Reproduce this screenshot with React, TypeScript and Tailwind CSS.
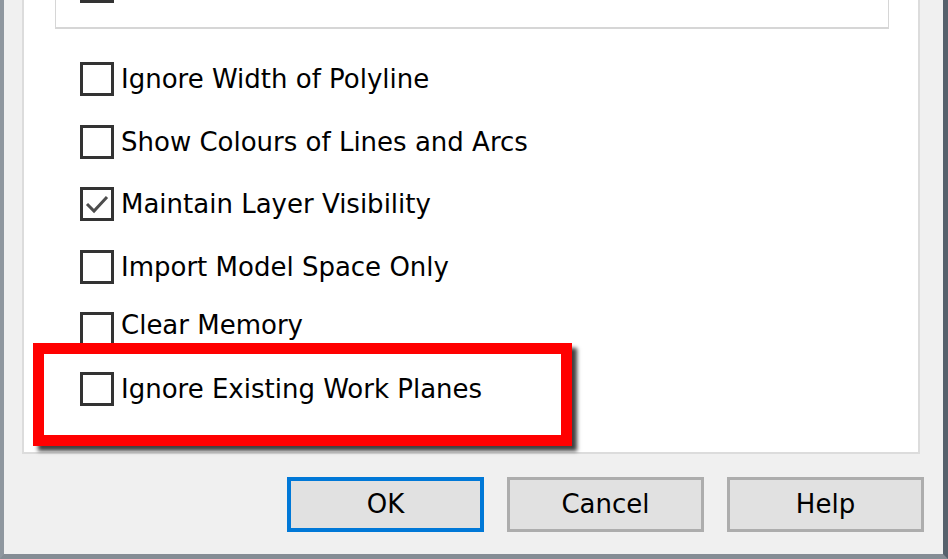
import type { ReactNode } from 'react'

const CheckBox = ({ checked }: { checked?: boolean }) => (
  <div className="w-[34px] h-[34px] shrink-0 border-[3px] border-[#333333] bg-white flex items-center justify-center">
    {checked && (
      <svg width="28" height="28" viewBox="0 0 28 28" fill="none">
        <polyline points="4,14 11,21 24,7" stroke="#4d4d4d" strokeWidth="3" />
      </svg>
    )}
  </div>
)

const Option = ({ label, checked, className = '' }: { label?: string; checked?: boolean; className?: string }) => (
  <div className={`flex items-center gap-[7px] h-[34px] ${className}`}>
    <CheckBox checked={checked} />
    {label && <span className="text-[26px] leading-none text-black whitespace-nowrap">{label}</span>}
  </div>
)

const DialogButton = ({ children, primary }: { children: ReactNode; primary?: boolean }) => (
  <button
    className={`w-[197px] h-[55px] shrink-0 bg-[#e1e1e1] text-[26px] text-black flex items-center justify-center ${
      primary ? 'border-[4px] border-[#0078d7]' : 'border-[3px] border-[#adadad]'
    }`}
  >
    {children}
  </button>
)

export default function App() {
  return (
    <div className="w-[948px] h-[559px] overflow-hidden bg-[#f0f0f0] flex flex-col border-l-[4px] border-l-[#8f979f] border-r-[5px] border-r-[#56616c] border-b-[5px] border-b-[#858d95] font-['DejaVu_Sans',sans-serif]">
      {/* white options panel */}
      <div className="ml-[18px] mr-[23px] h-[454px] shrink-0 bg-white border-x-2 border-b-2 border-[#dcdcdc] flex flex-col">
        {/* group box, mostly scrolled above */}
        <div className="ml-[31px] mr-[29px] h-[29px] shrink-0 overflow-hidden border-x border-b-2 border-[#d6d6d6]">
          <div className="-mt-[31px] pl-[24px]">
            <Option />
          </div>
        </div>

        <div className="pl-[56px] flex flex-col">
          <Option className="mt-[33px]" label="Ignore Width of Polyline" />
          <Option className="mt-[29px]" label="Show Colours of Lines and Arcs" />
          <Option className="mt-[28px]" label="Maintain Layer Visibility" checked />
          <Option className="mt-[29px]" label="Import Model Space Only" />
          <Option className="mt-[25px] h-[40px] items-start pt-[3px]" label="Clear Memory" />
        </div>

        {/* highlighted option */}
        <div className="-mt-[6px] ml-[9px] w-[539px] h-[103px] border-[11px] border-[#ff0000] shadow-[5px_5px_4px_rgba(0,0,0,0.75)] bg-white pl-[36px] pt-[18px] relative">
          <Option label="Ignore Existing Work Planes" />
        </div>
      </div>

      <div className="mt-[23px] ml-[283px] flex gap-[23px]">
        <DialogButton primary>OK</DialogButton>
        <DialogButton>Cancel</DialogButton>
        <DialogButton>Help</DialogButton>
      </div>
    </div>
  )
}
